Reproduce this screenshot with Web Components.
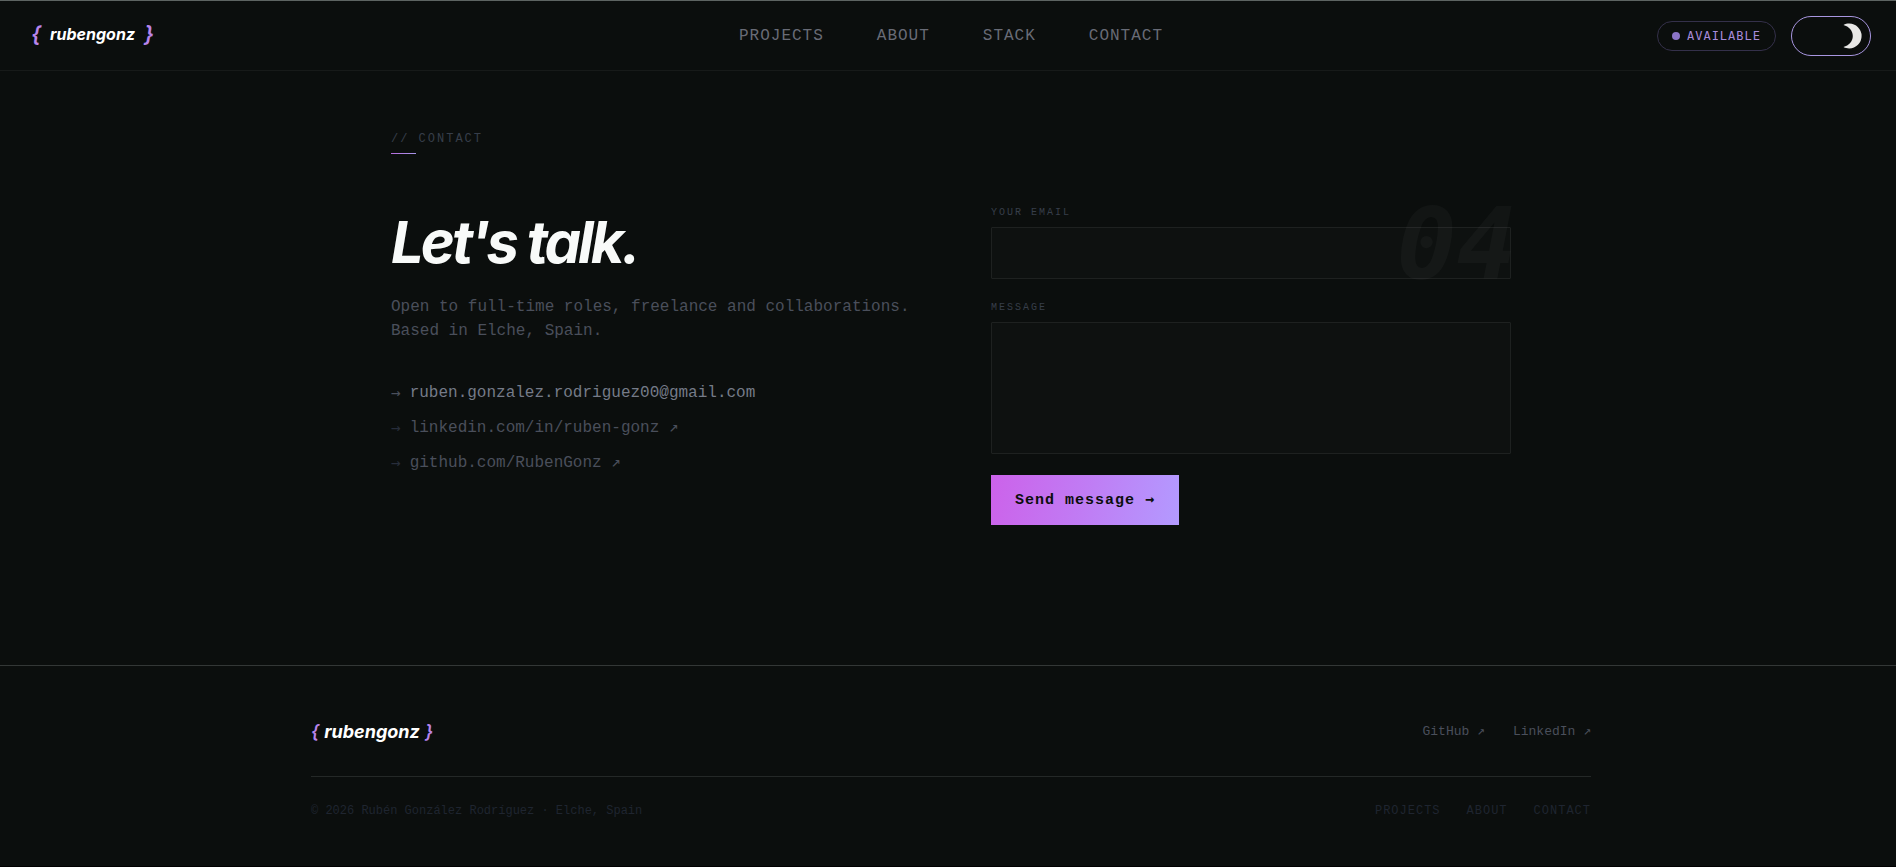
<!DOCTYPE html>
<html lang="en">
<head>
<meta charset="utf-8">
<meta name="viewport" content="width=device-width, initial-scale=1">
<title>rubengonz | Contact</title>
<style>
    :root {
        --bg: #0b0e0d;
        --text: #f8faf9;
        --gray-1: #757b88;
        --gray-2: #4a4f5b;
        --gray-3: #373e4a;
        --gray-4: #1f2530;
        --accent: #b884ea;
        --mono: "Liberation Mono", "DejaVu Sans Mono", monospace;
        --mono-alt: "DejaVu Sans Mono", monospace;
        --display: Inter, "Liberation Sans", sans-serif;
    }
    body {
        margin: 0;
        min-height: 100vh;
        box-sizing: border-box;
        display: flex;
        flex-direction: column;
        background: var(--bg);
        color: var(--text);
        font-family: var(--mono);
        font-size: 16px;
        line-height: 24px;
        border-top: 1px solid #5d6462;
        border-bottom: 1px solid #000;
    }
    main {
        flex: 1;
    }
</style>
</head>
<body>
<site-header></site-header>
<main>
    <contact-section number="04">
        <section-tag slot="tag">// CONTACT</section-tag>
        <contact-info slot="info"></contact-info>
        <contact-form slot="form"></contact-form>
    </contact-section>
</main>
<site-footer></site-footer>

<script>
/**
 * Logo: name between two accent braces
 */
class SiteLogo extends HTMLElement {
    constructor() {
        super();
        this.attachShadow({ mode: 'open' });
    }

    connectedCallback() {
        this.shadowRoot.innerHTML = `
            <style>
                :host {
                    display: inline-flex;
                    font-family: var(--display);
                    font-size: 16px;
                    font-weight: 700;
                    font-style: italic;
                    line-height: 24px;
                }
                a {
                    display: flex;
                    align-items: center;
                    gap: var(--logo-gap, 9px);
                    color: #fff;
                    text-decoration: none;
                }
                .brace {
                    color: var(--accent);
                    font-size: var(--brace-size, 20px);
                    font-weight: 600;
                }
            </style>
            <a href="#top">
                <span class="brace">{</span>
                <slot></slot>
                <span class="brace">}</span>
            </a>
        `;
    }
}

/**
 * Availability pill
 */
class StatusPill extends HTMLElement {
    constructor() {
        super();
        this.attachShadow({ mode: 'open' });
    }

    connectedCallback() {
        this.shadowRoot.innerHTML = `
            <style>
                :host {
                    display: inline-flex;
                    align-items: center;
                    gap: 7px;
                    box-sizing: border-box;
                    height: 30px;
                    padding: 0 14px;
                    border: 1px solid #34304a;
                    border-radius: 15px;
                    color: #a78bda;
                    font-family: var(--mono-alt);
                    font-size: 12px;
                    letter-spacing: 1px;
                }
                .dot {
                    width: 8px;
                    height: 8px;
                    border-radius: 50%;
                    background: #8b74c6;
                }
            </style>
            <span class="dot"></span>
            <slot></slot>
        `;
    }
}

/**
 * Dark / light switch with a moon on the dark side
 */
class ThemeToggle extends HTMLElement {
    constructor() {
        super();
        this.attachShadow({ mode: 'open' });
    }

    connectedCallback() {
        this.shadowRoot.innerHTML = `
            <style>
                :host {
                    display: block;
                }
                button {
                    display: flex;
                    align-items: center;
                    justify-content: flex-end;
                    width: 80px;
                    height: 40px;
                    padding: 0 8px;
                    border: 1px solid #a896e0;
                    border-radius: 20px;
                    background: transparent;
                    cursor: pointer;
                }
                button[aria-checked="false"] {
                    justify-content: flex-start;
                }
                svg {
                    display: block;
                }
            </style>
            <button type="button" role="switch" aria-checked="true" aria-label="Dark theme">
                <svg width="19" height="26" viewBox="0 0 19 26">
                    <path fill="#e8e8e6" d="M0.5 2C2.2 1 4.2 0.6 6.2 0.6A12.4 12.4 0 0 1 6.2 25.4C4.2 25.4 2.2 25 0.5 24C5.8 22.6 9.8 18.4 9.8 13C9.8 7.6 5.8 3.4 0.5 2Z"/>
                </svg>
            </button>
        `;
        const button = this.shadowRoot.querySelector('button');
        button.addEventListener('click', () => {
            const on = button.getAttribute('aria-checked') === 'true';
            button.setAttribute('aria-checked', String(!on));
        });
    }
}

class SiteHeader extends HTMLElement {
    constructor() {
        super();
        this.attachShadow({ mode: 'open' });
    }

    connectedCallback() {
        const links = ['PROJECTS', 'ABOUT', 'STACK', 'CONTACT'];
        this.shadowRoot.innerHTML = `
            <style>
                :host {
                    display: block;
                    border-bottom: 1px solid #171a19;
                }
                header {
                    display: grid;
                    grid-template-columns: 1fr auto 1fr;
                    align-items: center;
                    height: 69px;
                    padding: 0 25px 0 31px;
                }
                site-logo {
                    --brace-size: 22px;
                }
                nav {
                    display: flex;
                    gap: 53px;
                }
                nav a {
                    color: #686b76;
                    letter-spacing: 1px;
                    text-decoration: none;
                }
                nav a:hover {
                    color: var(--text);
                }
                .actions {
                    display: flex;
                    align-items: center;
                    justify-content: flex-end;
                    gap: 15px;
                }
            </style>
            <header>
                <div><site-logo>rubengonz</site-logo></div>
                <nav>
                    ${links.map(name => `<a href="#${name.toLowerCase()}">${name}</a>`).join('')}
                </nav>
                <div class="actions">
                    <status-pill>AVAILABLE</status-pill>
                    <theme-toggle></theme-toggle>
                </div>
            </header>
        `;
    }
}

/**
 * Small section label with a short accent rule under it
 */
class SectionTag extends HTMLElement {
    constructor() {
        super();
        this.attachShadow({ mode: 'open' });
    }

    connectedCallback() {
        this.shadowRoot.innerHTML = `
            <style>
                :host {
                    display: block;
                    color: var(--gray-3);
                    font-size: 12px;
                    line-height: 16px;
                    letter-spacing: 2px;
                }
                .rule {
                    width: 25px;
                    height: 1px;
                    margin-top: 6px;
                    background: linear-gradient(90deg, #b56bdc, #a896e8);
                }
            </style>
            <slot></slot>
            <div class="rule"></div>
        `;
    }
}

/**
 * Two column section with a faint number in the corner
 */
class ContactSection extends HTMLElement {
    constructor() {
        super();
        this.attachShadow({ mode: 'open' });
    }

    connectedCallback() {
        this.shadowRoot.innerHTML = `
            <style>
                :host {
                    display: block;
                    padding: 60px 32px 139px 38px;
                }
                section {
                    position: relative;
                    max-width: 1120px;
                    margin: 0 auto;
                }
                .columns {
                    display: grid;
                    grid-template-columns: 1fr 1fr;
                    gap: 80px;
                    margin-top: 51px;
                }
                .number {
                    position: absolute;
                    top: 58px;
                    right: -6px;
                    color: rgb(255 255 255 / 0.03);
                    font-family: var(--mono-alt);
                    font-size: 100px;
                    font-weight: 700;
                    font-style: italic;
                    line-height: 112px;
                    pointer-events: none;
                }
            </style>
            <section id="contact">
                <slot name="tag"></slot>
                <div class="columns">
                    <slot name="info"></slot>
                    <slot name="form"></slot>
                </div>
                <span class="number" aria-hidden="true">${this.getAttribute('number')}</span>
            </section>
        `;
    }
}

class ContactInfo extends HTMLElement {
    constructor() {
        super();
        this.attachShadow({ mode: 'open' });
    }

    connectedCallback() {
        this.shadowRoot.innerHTML = `
            <style>
                :host {
                    display: block;
                }
                h1 {
                    margin: 9px 0 25px;
                    font-family: var(--display);
                    font-size: 58px;
                    font-weight: 700;
                    font-style: italic;
                    line-height: 56px;
                    letter-spacing: -3px;
                }
                p {
                    margin: 0 0 38px;
                    color: var(--gray-2);
                }
                ul {
                    display: grid;
                    gap: 11px;
                    margin: 0;
                    padding: 0;
                    list-style: none;
                }
                li {
                    display: flex;
                    gap: 9px;
                    color: #272d3a;
                }
                li span {
                    font-family: var(--mono-alt);
                }
                li.main {
                    color: var(--gray-2);
                }
                a {
                    color: var(--gray-2);
                    text-decoration: none;
                }
                .main a {
                    color: var(--gray-1);
                }
                a:hover {
                    color: var(--text);
                }
            </style>
            <h1>Let's talk.</h1>
            <p>Open to full-time roles, freelance and collaborations.<br>Based in Elche, Spain.</p>
            <ul>
                <li class="main"><span>→</span><a href="mailto:ruben.gonzalez.rodriguez00@gmail.com">ruben.gonzalez.rodriguez00@gmail.com</a></li>
                <li><span>→</span><a href="#linkedin">linkedin.com/in/ruben-gonz ↗</a></li>
                <li><span>→</span><a href="#github">github.com/RubenGonz ↗</a></li>
            </ul>
        `;
    }
}

class ContactForm extends HTMLElement {
    constructor() {
        super();
        this.attachShadow({ mode: 'open' });
    }

    connectedCallback() {
        this.shadowRoot.innerHTML = `
            <style>
                :host {
                    display: block;
                }
                form {
                    display: flex;
                    flex-direction: column;
                    align-items: flex-start;
                    gap: 21px;
                }
                .field {
                    display: flex;
                    flex-direction: column;
                    gap: 6px;
                    width: 100%;
                }
                label {
                    color: var(--gray-3);
                    font-size: 10px;
                    line-height: 16px;
                    letter-spacing: 2px;
                }
                input, textarea {
                    display: block;
                    box-sizing: border-box;
                    width: 100%;
                    margin: 0;
                    padding: 14px 16px;
                    border: 1px solid #1e2120;
                    border-radius: 1px;
                    background: #0e1110;
                    color: var(--text);
                    font: 16px/22px var(--mono);
                    resize: none;
                    outline: none;
                }
                input {
                    height: 52px;
                }
                textarea {
                    height: 132px;
                }
                input:focus, textarea:focus {
                    border-color: var(--accent);
                }
                button {
                    height: 50px;
                    padding: 0 24px;
                    border: 0;
                    background: linear-gradient(100deg, #cc62ea, #c07cf4 50%, #b39aff);
                    color: #0b0e0d;
                    font: 700 15px/24px var(--mono);
                    letter-spacing: 1px;
                    cursor: pointer;
                }
                button span {
                    font-family: var(--mono-alt);
                }
            </style>
            <form>
                <div class="field">
                    <label for="email">YOUR EMAIL</label>
                    <input id="email" type="email" name="email">
                </div>
                <div class="field">
                    <label for="message">MESSAGE</label>
                    <textarea id="message" name="message"></textarea>
                </div>
                <button type="submit">Send message <span>→</span></button>
            </form>
        `;
        this.shadowRoot.querySelector('form').addEventListener('submit', e => e.preventDefault());
    }
}

class SiteFooter extends HTMLElement {
    constructor() {
        super();
        this.attachShadow({ mode: 'open' });
    }

    connectedCallback() {
        this.shadowRoot.innerHTML = `
            <style>
                :host {
                    display: block;
                    padding: 54px 32px 43px 38px;
                    border-top: 1px solid #333736;
                }
                footer {
                    max-width: 1280px;
                    margin: 0 auto;
                }
                .row {
                    display: flex;
                    align-items: center;
                    justify-content: space-between;
                }
                .top {
                    padding-bottom: 32px;
                    border-bottom: 1px solid #242827;
                    font-size: 13px;
                }
                .bottom {
                    padding-top: 22px;
                    color: var(--gray-4);
                    font-size: 12px;
                }
                site-logo {
                    --logo-gap: 5px;
                    --brace-size: 18px;
                    font-size: 18px;
                }
                .links {
                    display: flex;
                    gap: 26px;
                }
                a {
                    color: inherit;
                    text-decoration: none;
                }
                .top .links {
                    gap: 28px;
                    color: var(--gray-2);
                }
                .bottom .links {
                    letter-spacing: 1px;
                }
            </style>
            <footer>
                <div class="row top">
                    <site-logo>rubengonz</site-logo>
                    <div class="links">
                        <a href="#github">GitHub ↗</a>
                        <a href="#linkedin">LinkedIn ↗</a>
                    </div>
                </div>
                <div class="row bottom">
                    <span>© 2026 Rubén González Rodríguez · Elche, Spain</span>
                    <nav class="links">
                        <a href="#projects">PROJECTS</a>
                        <a href="#about">ABOUT</a>
                        <a href="#contact">CONTACT</a>
                    </nav>
                </div>
            </footer>
        `;
    }
}

customElements.define('site-logo', SiteLogo);
customElements.define('status-pill', StatusPill);
customElements.define('theme-toggle', ThemeToggle);
customElements.define('site-header', SiteHeader);
customElements.define('section-tag', SectionTag);
customElements.define('contact-section', ContactSection);
customElements.define('contact-info', ContactInfo);
customElements.define('contact-form', ContactForm);
customElements.define('site-footer', SiteFooter);
</script>
</body>
</html>
